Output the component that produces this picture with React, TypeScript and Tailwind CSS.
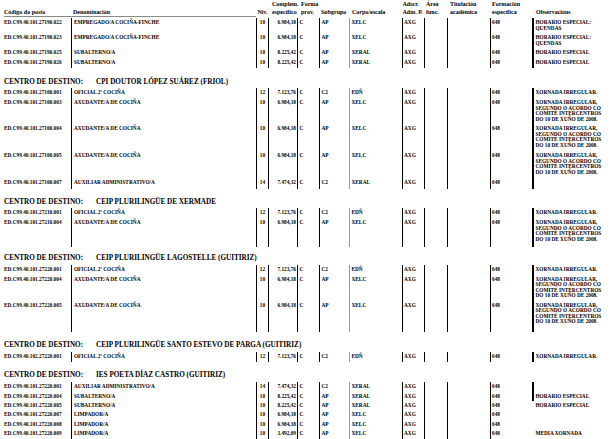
import React from "react";

type Row = {
  code: string;
  den: string;
  niv: string;
  comp: string;
  sub: string;
  corpo: string;
  obs?: string;
  h: string;
  noObsLine?: boolean;
};

type Section = {
  title?: string;
  mt: string;
  rows: Row[];
};

const GRID =
  "grid grid-cols-[71px_185px_13px_29px_21px_30px_53px_22px_23px_43px_42px_1fr]";

const XOR4 =
  "XORNADA IRREGULAR,\nSEGUNDO O ACORDO CO\nCOMITÉ INTERCENTROS\nDO 10 DE XUÑO DE 2008.";

const sections: Section[] = [
  {
    mt: "mt-[1.25px]",
    rows: [
      { code: "ED.C99.40.101.27190.022", den: "EMPREGADO/A COCIÑA-FINCHE", niv: "10", comp: "6.984,18", sub: "AP", corpo: "XELC", obs: "HORARIO ESPECIAL:\nQUENDAS", h: "h-[15px]" },
      { code: "ED.C99.40.101.27190.023", den: "EMPREGADO/A COCIÑA-FINCHE", niv: "10", comp: "6.984,18", sub: "AP", corpo: "XELC", obs: "HORARIO ESPECIAL:\nQUENDAS", h: "h-[15px]" },
      { code: "ED.C99.40.101.27190.025", den: "SUBALTERNO/A", niv: "10", comp: "8.225,42", sub: "AP", corpo: "XERAL", obs: "HORARIO ESPECIAL", h: "h-[10px]" },
      { code: "ED.C99.40.101.27190.026", den: "SUBALTERNO/A", niv: "10", comp: "8.225,42", sub: "AP", corpo: "XERAL", obs: "HORARIO ESPECIAL", h: "h-[9.5px]" },
    ],
  },
  {
    title: "CPI DOUTOR LÓPEZ SUÁREZ (FRIOL)",
    mt: "mt-[9.75px]",
    rows: [
      { code: "ED.C99.40.101.27100.001", den: "OFICIAL 2ª COCIÑA", niv: "12", comp: "7.123,76", sub: "C2", corpo: "EDÑ", obs: "XORNADA IRREGULAR.", h: "h-[10px]" },
      { code: "ED.C99.40.101.27100.003", den: "AXUDANTE/A DE COCIÑA", niv: "10", comp: "6.984,18", sub: "AP", corpo: "XELC", obs: XOR4, h: "h-[26px]" },
      { code: "ED.C99.40.101.27100.004", den: "AXUDANTE/A DE COCIÑA", niv: "10", comp: "6.984,18", sub: "AP", corpo: "XELC", obs: XOR4, h: "h-[27px]" },
      { code: "ED.C99.40.101.27100.005", den: "AXUDANTE/A DE COCIÑA", niv: "10", comp: "6.984,18", sub: "AP", corpo: "XELC", obs: XOR4, h: "h-[27px]" },
      { code: "ED.C99.40.101.27100.007", den: "AUXILIAR ADMINISTRATIVO/A", niv: "14", comp: "7.474,32", sub: "C2", corpo: "XERAL", h: "h-[10.75px]" },
    ],
  },
  {
    title: "CEIP PLURILINGÜE DE XERMADE",
    mt: "mt-[8.5px]",
    rows: [
      { code: "ED.C99.40.101.27210.001", den: "OFICIAL 2ª COCIÑA", niv: "12", comp: "7.123,76", sub: "C2", corpo: "EDÑ", obs: "XORNADA IRREGULAR.", h: "h-[10px]" },
      { code: "ED.C99.40.101.27210.004", den: "AXUDANTE/A DE COCIÑA", niv: "10", comp: "6.984,18", sub: "AP", corpo: "XELC", obs: XOR4, h: "h-[28.5px]" },
    ],
  },
  {
    title: "CEIP PLURILINGÜE LAGOSTELLE (GUITIRIZ)",
    mt: "mt-[7.25px]",
    rows: [
      { code: "ED.C99.40.101.27220.001", den: "OFICIAL 2ª COCIÑA", niv: "12", comp: "7.123,76", sub: "C2", corpo: "EDÑ", obs: "XORNADA IRREGULAR.", h: "h-[10px]" },
      { code: "ED.C99.40.101.27220.004", den: "AXUDANTE/A DE COCIÑA", niv: "10", comp: "6.984,18", sub: "AP", corpo: "XELC", obs: XOR4, h: "h-[26px]" },
      { code: "ED.C99.40.101.27220.005", den: "AXUDANTE/A DE COCIÑA", niv: "10", comp: "6.984,18", sub: "AP", corpo: "XELC", obs: XOR4, h: "h-[31.5px]" },
    ],
  },
  {
    title: "CEIP PLURILINGÜE SANTO ESTEVO DE PARGA (GUITIRIZ)",
    mt: "mt-[9px]",
    rows: [
      { code: "ED.C99.40.102.27220.001", den: "OFICIAL 2ª COCIÑA", niv: "12", comp: "7.123,76", sub: "C2", corpo: "EDÑ", obs: "XORNADA IRREGULAR.", h: "h-[10px]" },
    ],
  },
  {
    title: "IES POETA DÍAZ CASTRO (GUITIRIZ)",
    mt: "mt-[9px]",
    rows: [
      { code: "ED.C99.40.101.27220.001", den: "AUXILIAR ADMINISTRATIVO/A", niv: "14", comp: "7.474,32", sub: "C2", corpo: "XERAL", h: "h-[10px]" },
      { code: "ED.C99.40.101.27220.004", den: "SUBALTERNO/A", niv: "10", comp: "8.225,42", sub: "AP", corpo: "XERAL", obs: "HORARIO ESPECIAL", h: "h-[9.25px]" },
      { code: "ED.C99.40.101.27220.005", den: "SUBALTERNO/A", niv: "10", comp: "8.225,42", sub: "AP", corpo: "XERAL", obs: "HORARIO ESPECIAL", h: "h-[9.25px]", noObsLine: true },
      { code: "ED.C99.40.101.27220.007", den: "LIMPADOR/A", niv: "10", comp: "6.984,18", sub: "AP", corpo: "XELC", h: "h-[9.25px]", noObsLine: true },
      { code: "ED.C99.40.101.27220.008", den: "LIMPADOR/A", niv: "10", comp: "6.984,18", sub: "AP", corpo: "XELC", h: "h-[9.25px]", noObsLine: true },
      { code: "ED.C99.40.101.27220.009", den: "LIMPADOR/A", niv: "10", comp: "3.492,09", sub: "AP", corpo: "XELC", obs: "MEDIA XORNADA", h: "h-[13px]", noObsLine: true },
    ],
  },
];

function Header() {
  return (
    <div className="pt-[1px]">
      <div className={`${GRID} text-[6px] font-bold leading-[7.5px] whitespace-nowrap`}>
        <div className="pl-[4px] flex flex-col">
          <span>&nbsp;</span>
          <span>Código do posto</span>
        </div>
        <div className="pl-[2px] flex flex-col">
          <span>&nbsp;</span>
          <span>Denominación</span>
        </div>
        <div className="pl-[1.5px] flex flex-col">
          <span>&nbsp;</span>
          <span>Niv.</span>
        </div>
        <div className="pl-[3px] flex flex-col">
          <span>Complem.</span>
          <span>específico</span>
        </div>
        <div className="pl-[3px] flex flex-col">
          <span>Forma</span>
          <span>prov.</span>
        </div>
        <div className="pl-[2px] flex flex-col">
          <span>&nbsp;</span>
          <span>Subgrupo</span>
        </div>
        <div className="pl-[3px] flex flex-col">
          <span>&nbsp;</span>
          <span>Corpo/escala</span>
        </div>
        <div className="pl-[0.5px] flex flex-col">
          <span>Adscr.</span>
          <span>Adm. P.</span>
        </div>
        <div className="pl-[2px] flex flex-col">
          <span>Área</span>
          <span>func.</span>
        </div>
        <div className="pl-[3px] flex flex-col">
          <span>Titulación</span>
          <span>académica</span>
        </div>
        <div className="pl-[2px] flex flex-col">
          <span>Formación</span>
          <span>específica</span>
        </div>
        <div className="pl-[4px] flex flex-col">
          <span>&nbsp;</span>
          <span>Observacións</span>
        </div>
      </div>
      <div className="ml-[4px] w-[252px] h-px bg-[#8a8a8a]" />
    </div>
  );
}

function DataRow({ r }: { r: Row }) {
  return (
    <div className={`${GRID} ${r.h} text-[5.3px] font-bold leading-[5.5px] whitespace-nowrap`}>
      <div className="pl-[4px] pt-[2px]">{r.code}</div>
      <div className="border-l border-black pl-[2px] pt-[2px]">{r.den}</div>
      <div className="border-l border-r border-black text-center pt-[2px]">{r.niv}</div>
      <div className="border-r border-black text-right pr-[1px] pt-[2px]">{r.comp}</div>
      <div className="pl-[1.5px] pt-[2px]">C</div>
      <div className="border-l border-black pl-[1.5px] pt-[2px]">{r.sub}</div>
      <div className="border-l-[1.5px] border-[#9a9a9a] pl-[1.5px] pt-[2px]">{r.corpo}</div>
      <div className="border-l border-black pl-[1px] pt-[2px]">AXG</div>
      <div className="border-l border-black pt-[2px]" />
      <div className="border-l border-black pt-[2px]" />
      <div className="border-l border-black pl-[1px] pt-[2px]">648</div>
      <div
        className={`${r.noObsLine ? "border-l-2 border-transparent" : "border-l-2 border-black"} pl-[1.5px] pt-[2px] whitespace-pre-line`}
      >
        {r.obs ?? ""}
      </div>
    </div>
  );
}

function SectionBlock({ s }: { s: Section }) {
  return (
    <div className={s.mt}>
      {s.title && (
        <div className="flex h-[9px] items-center pl-[4px] text-[7.2px] font-bold leading-[9px] whitespace-nowrap">
          <span className="w-[92px]">CENTRO DE DESTINO:</span>
          <span>{s.title}</span>
        </div>
      )}
      <div className={s.title ? "mt-[1.75px]" : ""}>
        {s.rows.map((r, i) => (
          <DataRow key={i} r={r} />
        ))}
      </div>
    </div>
  );
}

export default function App() {
  return (
    <div className="w-[616px] h-[439px] overflow-hidden bg-white text-black [font-family:'Liberation_Serif','Times_New_Roman',serif]">
      <Header />
      {sections.map((s, i) => (
        <SectionBlock key={i} s={s} />
      ))}
    </div>
  );
}
